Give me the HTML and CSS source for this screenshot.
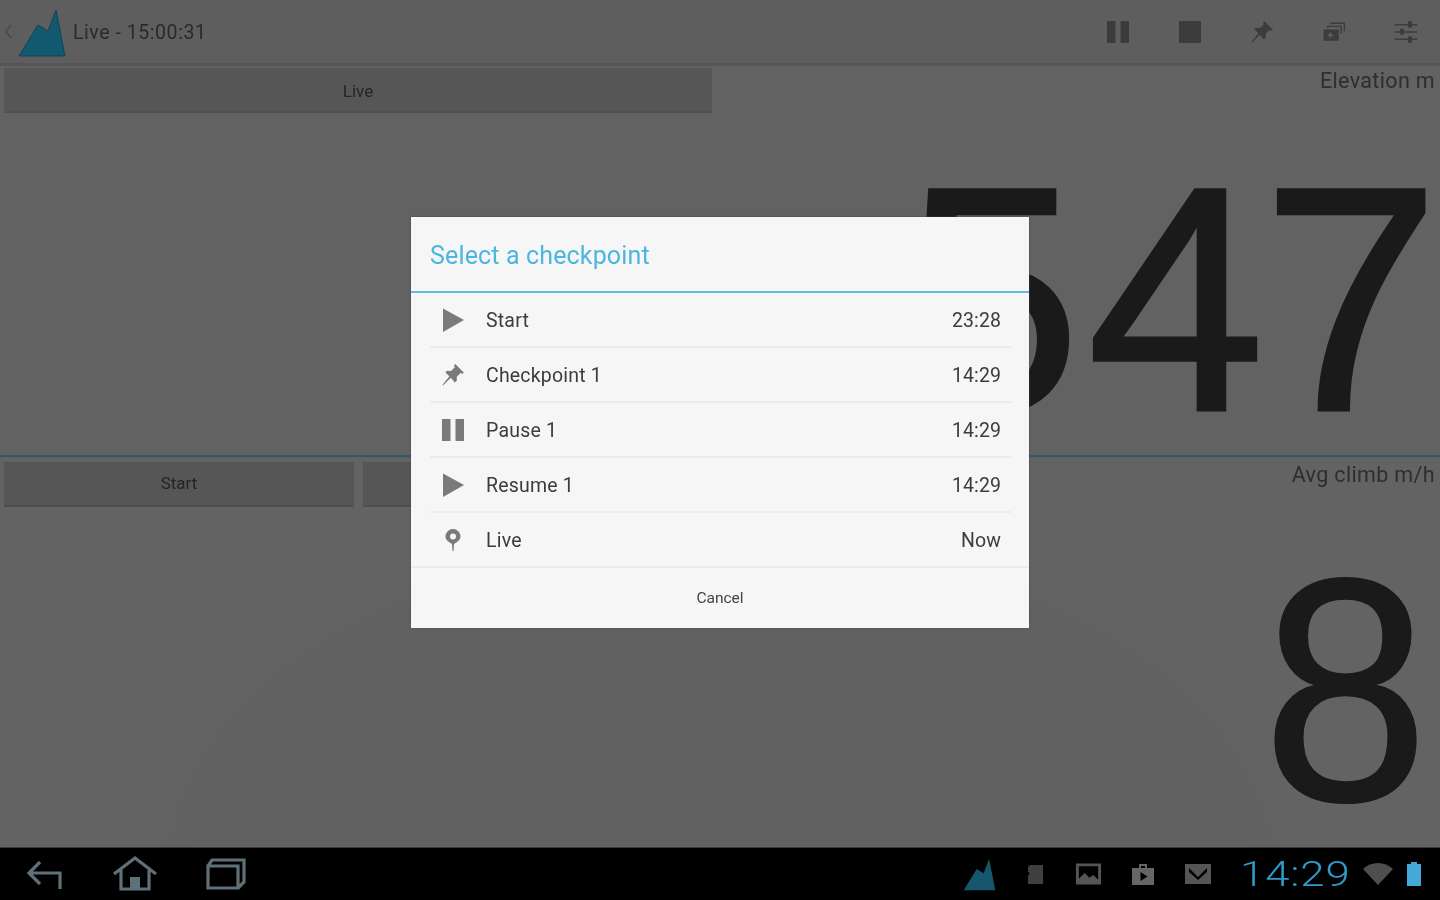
FILE: index.html
```html
<!DOCTYPE html>
<html lang="en">
<head>
<meta charset="utf-8">
<title>Select a checkpoint</title>
<link rel="stylesheet" href="styles.css">
</head>
<body>
<svg class="defs" width="0" height="0" aria-hidden="true">
  <defs>
    <symbol id="i-pin" viewBox="0 0 24 24"><path d="M14.2 1 23 9.800 21 10.800 19.600 10 15.800 13.800 15.800 17.800 13.800 19.400 9.800 14.800 2 22.500 1.400 22 8.400 13.200 4.400 9.600 6 7.800 10 8 13.800 4.200 13 2.800Z"/></symbol>
    <symbol id="i-peak" viewBox="0 0 48 48"><path d="M1 47 20 16 30 22 38 1 47 47Z"/></symbol>
    <symbol id="i-play" viewBox="0 0 24 24"><path d="M2 .5 23 12 2 24Z"/></symbol>
    <symbol id="i-pause" viewBox="0 0 24 24"><path d="M1 1H9.500V23H1ZM14.500 1H23V23H14.500Z"/></symbol>
  </defs>
</svg>
<div class="screen">
  <main class="stage">
    <header class="actionbar">
      <div class="brand">
        <svg class="chevron" viewBox="0 0 8 16"><path d="M6.500 2 1.500 8 6.500 14"/></svg>
        <svg class="logo"><use href="#i-peak"/></svg>
        <span class="bar-title">Live - 15:00:31</span>
      </div>
      <div class="actions">
        <svg class="act"><use href="#i-pause"/></svg>
        <svg class="act" viewBox="0 0 24 24"><path d="M1 1H23V23H1Z"/></svg>
        <svg class="act"><use href="#i-pin"/></svg>
        <svg class="act" viewBox="0 0 30 24"><path d="M2 9H21V23H2ZM9.500 12.500V15H7V17H9.500V19.500H11.500V17H14V15H11.500V12.500Z" fill-rule="evenodd"/><path class="thin" d="M7 7V5H24V14M11 3V1H28V11"/></svg>
        <svg class="act" viewBox="0 0 30 30"><path class="thin" d="M1 6H29M1 15H29M1 24H29M20 1V10M10 10V19M20 20V29"/><path d="M17.500 2H22.500V9H17.500ZM7.500 11.500H12.500V18H7.500ZM17.500 21H22.500V28H17.500Z"/></svg>
      </div>
    </header>

    <section class="panel panel-top">
      <div class="panel-head">
        <div class="tabs"><button class="tab tab-live">Live</button></div>
        <span class="metric-label">Elevation m</span>
      </div>
      <div class="metric-value"><span class="lead-digit">5</span>47</div>
    </section>

    <section class="panel panel-bottom">
      <div class="panel-head">
        <div class="tabs">
          <button class="tab tab-seg">Start</button>
          <button class="tab tab-seg">Live</button>
        </div>
        <span class="metric-label">Avg climb m/h</span>
      </div>
      <div class="metric-value">8</div>
    </section>

    <div class="dialog" role="dialog">
      <h1 class="dialog-title">Select a checkpoint</h1>
      <ul class="list">
        <li class="item"><svg class="item-icon"><use href="#i-play"/></svg><span class="item-name">Start</span><span class="item-time">23:28</span></li>
        <li class="item"><svg class="item-icon"><use href="#i-pin"/></svg><span class="item-name">Checkpoint 1</span><span class="item-time">14:29</span></li>
        <li class="item"><svg class="item-icon"><use href="#i-pause"/></svg><span class="item-name">Pause 1</span><span class="item-time">14:29</span></li>
        <li class="item"><svg class="item-icon"><use href="#i-play"/></svg><span class="item-name">Resume 1</span><span class="item-time">14:29</span></li>
        <li class="item"><svg class="item-icon" viewBox="0 0 24 24"><path fill-rule="evenodd" d="M12 1A7.500 7.500 0 0 1 19.500 8.500C19.500 12.500 15 14.500 13 16L12.500 23H11.500L11 16C9 14.500 4.500 12.500 4.500 8.500A7.500 7.500 0 0 1 12 1ZM12 5.500A3 3 0 1 0 12 11.500 3 3 0 1 0 12 5.500Z"/></svg><span class="item-name">Live</span><span class="item-time">Now</span></li>
      </ul>
      <button class="cancel">Cancel</button>
    </div>
  </main>

  <footer class="navbar">
    <div class="nav-buttons">
      <svg class="nav-back" viewBox="0 0 36 32"><path d="M13 3 2 14 13 25M2 14H33V30"/></svg>
      <svg class="nav-home" viewBox="0 0 46 36"><path d="M2 18 23 2 44 18M9 14V33H37V14"/><path class="nav-fill" d="M18 21H28V33H18Z"/></svg>
      <svg class="nav-recent" viewBox="0 0 42 34"><path d="M3 9H33V31H3ZM3 9 7 3H39V25L33 31"/></svg>
    </div>
    <div class="tray">
      <svg class="tray-logo"><use href="#i-peak"/></svg>
      <svg class="tray-icon tray-sd" viewBox="4 1 18 22"><path d="M7 2H21V22H5V13L7 11 5 9V4Z"/></svg>
      <svg class="tray-icon tray-pic" viewBox="0 0 28 24"><path fill-rule="evenodd" d="M1 1H27V23H1ZM4 4V17L10 11 15 16 19 13 24 18V4Z"/></svg>
      <svg class="tray-icon tray-bag" viewBox="0 0 24 24"><path fill-rule="evenodd" d="M8 6V2H16V6H23V23H1V6ZM10 4V6H14V4ZM9.500 10V19L16.500 14.500Z"/></svg>
      <svg class="tray-icon tray-mail" viewBox="0 0 28 22"><path fill-rule="evenodd" d="M1 1H27V21H1ZM5 5 14 14 23 5 23 9 14 17 5 9Z"/></svg>
      <span class="clock">14:29</span>
      <svg class="tray-wifi" viewBox="0 0 30 24"><path d="M0 7C8-1 22-1 30 7L15 23Z"/></svg>
      <svg class="tray-batt" viewBox="0 0 16 24"><path d="M5 0H11V2H15V24H1V2H5Z"/></svg>
    </div>
  </footer>
</div>
</body>
</html>
```

FILE: styles.css
```css
* { box-sizing: border-box; margin: 0; padding: 0; }
html, body { width: 1440px; height: 900px; overflow: hidden; background: #000; }
body { font-family: Roboto, "Open Sans", sans-serif; }
.defs { position: absolute; }
.screen { width: 1440px; height: 900px; display: flex; flex-direction: column; }

.stage {
  position: relative;
  height: 847px;
  display: flex;
  flex-direction: column;
  background: #626262;
  overflow: hidden;
}

.actionbar {
  height: 66px;
  flex: none;
  display: flex;
  justify-content: space-between;
  align-items: center;
  background: #5e5e5e;
  border-bottom: 3px solid #555;
}
.brand { display: flex; align-items: center; height: 100%; padding-left: 4px; }
.chevron { width: 9px; height: 17px; margin-right: 5px; fill: none; stroke: #4b4b4b; stroke-width: 1.5; }
.logo { width: 48px; height: 48px; margin-top: 3px; fill: #12586f; stroke: #0e4557; stroke-width: 1; filter: blur(.5px); }
.bar-title { margin: 2px 0 0 7px; font-size: 19.500px; letter-spacing: .55px; color: #2a2a2a; filter: blur(.7px); }
.actions { display: flex; align-items: center; gap: 48px; padding-right: 22px; }
.act { width: 24px; height: 24px; fill: #3c3c3c; stroke: none; filter: blur(.6px); }
.thin { fill: none; stroke: #3c3c3c; stroke-width: 1.8; }

.panel { flex: none; display: flex; flex-direction: column; }
.panel-top { height: 389px; padding: 2px 4px 0; }
.panel-bottom {
  height: 392px;
  padding: 5px 4px 0;
  border-top: 2px solid #2f566b;
  background: radial-gradient(ellipse 620px 380px at 720px 420px, #616161 0 80%, #636363 100%);
}
.panel-head { display: flex; justify-content: space-between; align-items: flex-start; }
.tabs { display: flex; gap: 9px; }
.tab {
  height: 45px;
  padding-top: 2px;
  border: 0;
  border-bottom: 2px solid #4f4f4f;
  background: #565656;
  font: 17px Roboto, sans-serif;
  color: #242424;
  filter: blur(.6px);
}
.panel-bottom .tab { padding-top: 0; padding-bottom: 2px; }
.tab-live { width: 708px; }
.tab-seg { width: 350px; }
.metric-label { font-size: 21.500px; letter-spacing: .35px; line-height: 24px; margin: 1px 1px 0 0; color: #2e2e2e; filter: blur(.7px); }
.metric-value {
  align-self: flex-end;
  font-family: "Liberation Sans", sans-serif;
  font-size: 320px;
  line-height: 270px;
  color: #1a1a1a;
  white-space: nowrap;
  filter: blur(.7px);
}
.panel-top .metric-value { margin: 51px -1px 0 0; letter-spacing: -3px; -webkit-text-stroke: 3px #1a1a1a; }
.lead-digit { margin-right: 9px; }
.panel-bottom .metric-value {
  margin: 48px 4px 0 0;
  font-size: 318px;
  -webkit-text-stroke: 2px #1a1a1a;
  transform: scaleX(.94);
  transform-origin: 70% 50%;
}

.dialog {
  position: absolute;
  left: 411px;
  top: 217px;
  width: 618px;
  height: 411px;
  display: flex;
  flex-direction: column;
  background: #f6f6f6;
  box-shadow: 0 0 2px #444;
}
.dialog-title {
  height: 76px;
  flex: none;
  padding: 2px 19px 0;
  display: flex;
  align-items: center;
  border-bottom: 2px solid #62bde3;
  font-size: 25px;
  letter-spacing: .15px;
  font-weight: 400;
  line-height: 1;
  color: #4db6e0;
  filter: blur(.6px);
}
.list { list-style: none; flex: none; }
.item {
  height: 55.100px;
  margin: 0 18px 0 19px;
  display: flex;
  align-items: center;
  border-bottom: 2px solid #ececec;
  font-size: 19.500px;
  color: #3c3c3c;
}
.item:last-child { margin: 0; padding: 0 18px 0 19px; }
.item-icon { width: 24px; height: 24px; margin-left: 11px; fill: #7a7a7a; filter: blur(.5px); }
.item-name { margin: 2px 0 0 21px; flex: 1; letter-spacing: .2px; filter: blur(.6px); }
.item-time { margin: 2px 10px 0 0; letter-spacing: .1px; filter: blur(.6px); }
.cancel {
  flex: 1;
  border: 0;
  background: transparent;
  font: 15.500px Roboto, sans-serif;
  color: #444;
  filter: blur(.6px);
}

.navbar {
  height: 53px;
  flex: none;
  display: flex;
  justify-content: space-between;
  align-items: center;
  background: #000;
  border-top: 1px solid #3a3a3a;
}
.nav-buttons { display: flex; align-items: center; padding-left: 27px; }
.nav-buttons svg { fill: none; stroke: #5f7078; stroke-width: 3.200; filter: blur(.5px); }
.nav-back { width: 36px; height: 32px; margin-top: 2px; }
.nav-home { width: 46px; height: 36px; margin-left: 49px; }
.nav-fill { fill: #5f7078; stroke: none; }
.nav-recent { width: 42px; height: 34px; margin-left: 47px; }
.tray { display: flex; align-items: center; padding-right: 18px; }
.tray-logo { width: 33px; height: 33px; fill: #15566d; filter: blur(.5px); }
.tray-icon { fill: #555; filter: blur(.7px); }
.tray-sd { width: 17px; height: 23px; margin-left: 31px; fill: #3f3f3f; }
.tray-pic { width: 27px; height: 24px; margin-left: 31px; }
.tray-bag { width: 26px; height: 24px; margin-left: 28px; fill: #666; }
.tray-mail { width: 28px; height: 24px; margin-left: 28px; }
.clock {
  margin-left: 28px;
  font-size: 35px;
  font-weight: 300;
  letter-spacing: .7px;
  transform: scaleX(1.25);
  transform-origin: left center;
  width: 123px;
  color: #2f9bc9;
  line-height: 1;
  filter: blur(.4px);
}
.tray-wifi { width: 30px; height: 24px; fill: #4e4e4e; filter: blur(.4px); }
.tray-batt { width: 16px; height: 24px; margin-left: 13px; fill: #44a8d8; filter: blur(.4px); }
```
